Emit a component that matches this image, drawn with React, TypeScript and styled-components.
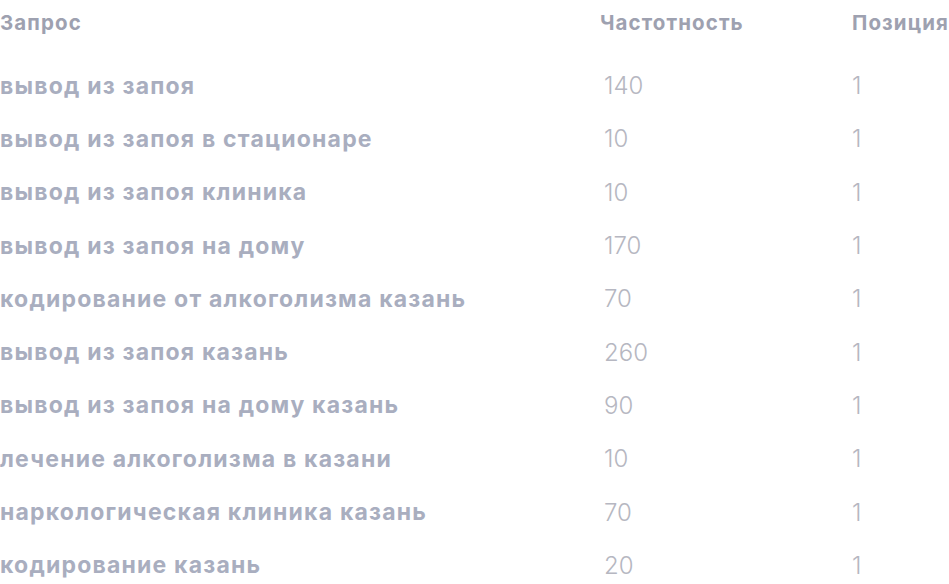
import styled, { createGlobalStyle } from 'styled-components'

const GlobalStyle = createGlobalStyle`
  html, body {
    margin: 0;
    padding: 0;
    background: #ffffff;
  }
  body {
    font-family: Inter, "Noto Sans", sans-serif;
  }
`

const Table = styled.div`
  width: 949px;
  display: flex;
  flex-direction: column;
`

const Row = styled.div<{ $head?: boolean }>`
  display: grid;
  grid-template-columns: 600px 252px 1fr;
  align-items: center;
  height: ${(p) => (p.$head ? '44px' : '53.3px')};
  margin-bottom: ${(p) => (p.$head ? '15px' : '0')};
`

const HeadCell = styled.div`
  font-size: 20.5px;
  font-weight: 700;
  color: #9ea1b0;
  letter-spacing: 1.1px;
  white-space: nowrap;
`

const QueryCell = styled.div`
  font-size: 23px;
  font-weight: 700;
  color: #a9aebf;
  letter-spacing: 1.2px;
  white-space: nowrap;
`

const NumCell = styled.div<{ $pad?: number }>`
  font-size: 24px;
  font-weight: 300;
  color: #b6b7c1;
  padding-left: ${(p) => p.$pad ?? 4}px;
`

const rows: [string, number, number][] = [
  ['вывод из запоя', 140, 1],
  ['вывод из запоя в стационаре', 10, 1],
  ['вывод из запоя клиника', 10, 1],
  ['вывод из запоя на дому', 170, 1],
  ['кодирование от алкоголизма казань', 70, 1],
  ['вывод из запоя казань', 260, 1],
  ['вывод из запоя на дому казань', 90, 1],
  ['лечение алкоголизма в казани', 10, 1],
  ['наркологическая клиника казань', 70, 1],
  ['кодирование казань', 20, 1],
]

export default function App() {
  return (
    <>
      <GlobalStyle />
      <Table>
        <Row $head>
          <HeadCell>Запрос</HeadCell>
          <HeadCell>Частотность</HeadCell>
          <HeadCell>Позиция</HeadCell>
        </Row>
        {rows.map(([q, freq, pos]) => (
          <Row key={q}>
            <QueryCell>{q}</QueryCell>
            <NumCell>{freq}</NumCell>
            <NumCell $pad={0}>{pos}</NumCell>
          </Row>
        ))}
      </Table>
    </>
  )
}
